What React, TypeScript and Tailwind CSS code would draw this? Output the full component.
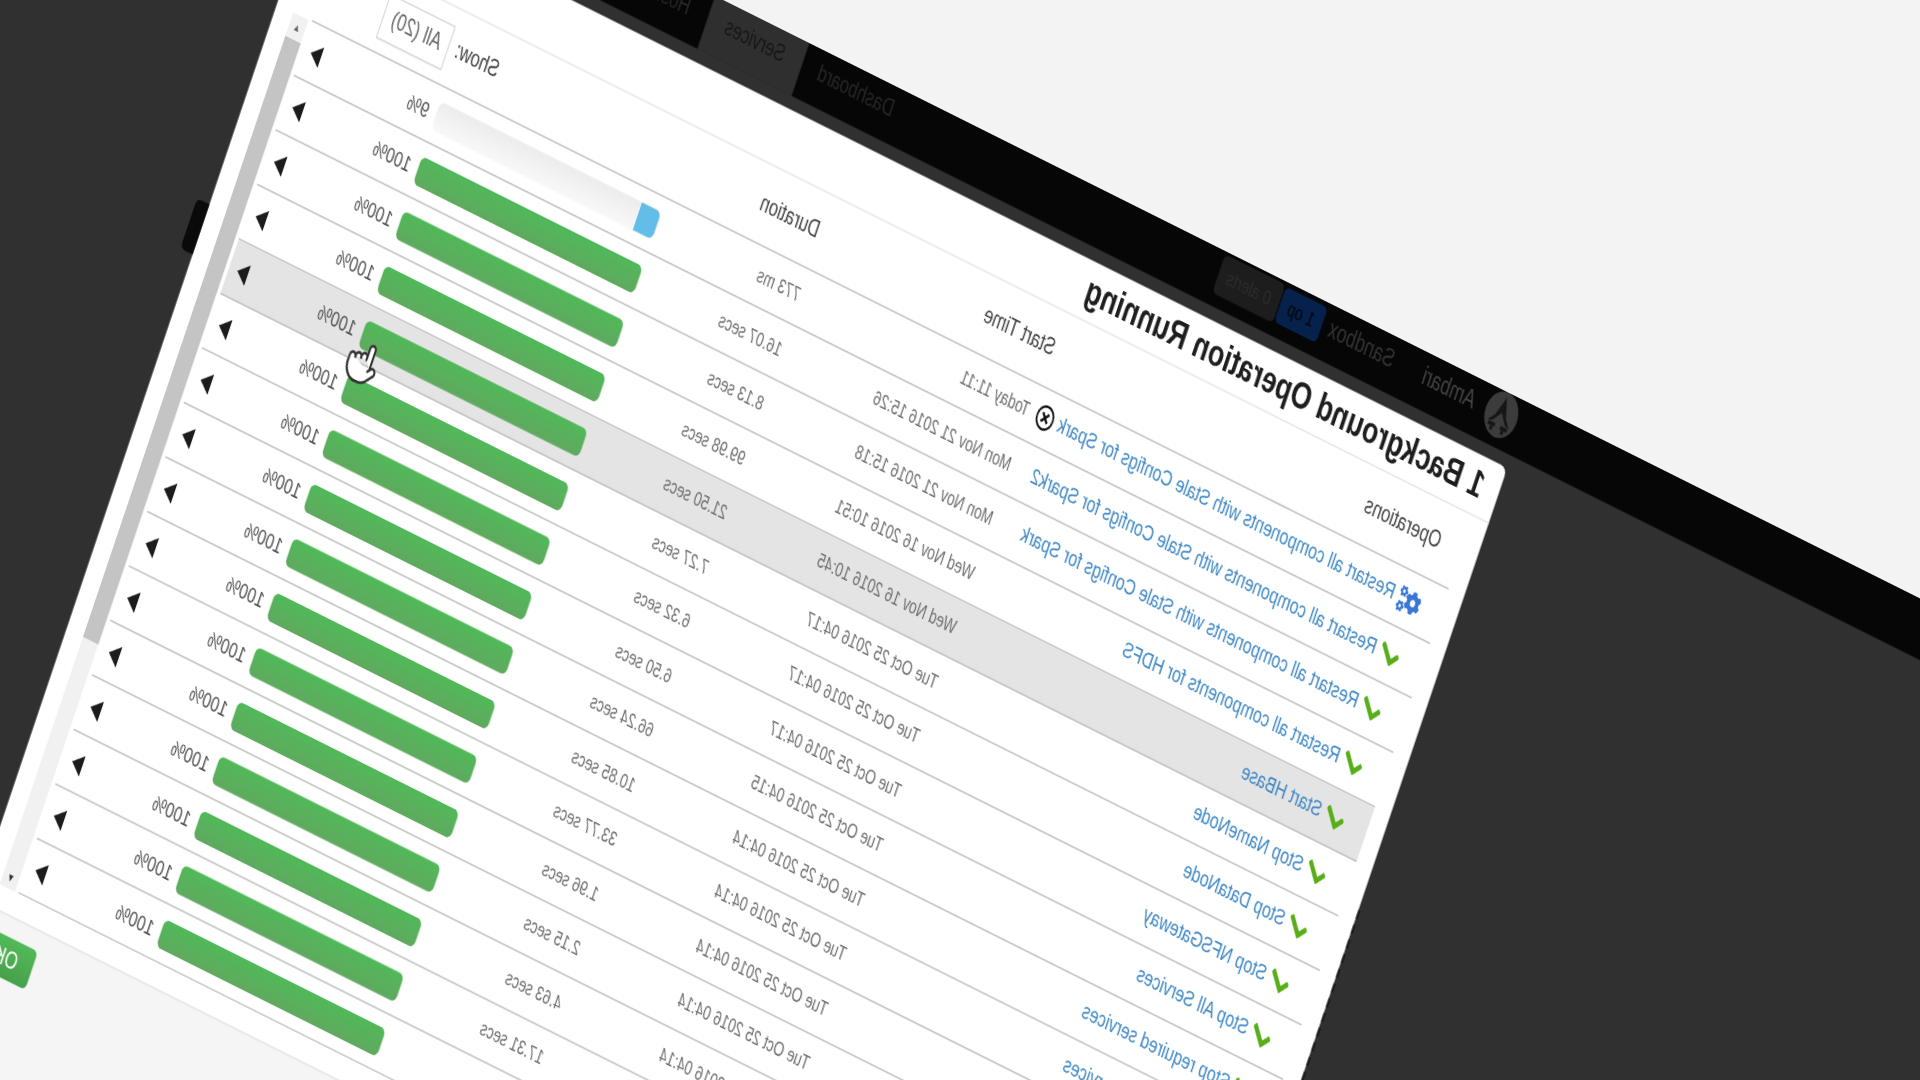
import { Pointer } from "lucide-react";
import { FaCheck, FaCogs, FaRegTimesCircle } from "react-icons/fa";

type Row = { name: string; time: string; dur: string; pct: number; done: boolean; active?: boolean };

const rows: Row[] = [
  { name: "Restart all components with Stale Configs for Spark", time: "Today 11:11", dur: "773 ms", pct: 9, done: false },
  { name: "Restart all components with Stale Configs for Spark2", time: "Mon Nov 21 2016 15:26", dur: "16.07 secs", pct: 100, done: true },
  { name: "Restart all components with Stale Configs for Spark", time: "Mon Nov 21 2016 15:18", dur: "8.13 secs", pct: 100, done: true },
  { name: "Restart all components for HDFS", time: "Wed Nov 16 2016 10:51", dur: "99.98 secs", pct: 100, done: true },
  { name: "Start HBase", time: "Wed Nov 16 2016 10:45", dur: "21.50 secs", pct: 100, done: true, active: true },
  { name: "Stop NameNode", time: "Tue Oct 25 2016 04:17", dur: "7.27 secs", pct: 100, done: true },
  { name: "Stop DataNode", time: "Tue Oct 25 2016 04:17", dur: "6.32 secs", pct: 100, done: true },
  { name: "Stop NFSGateway", time: "Tue Oct 25 2016 04:17", dur: "6.50 secs", pct: 100, done: true },
  { name: "Stop All Services", time: "Tue Oct 25 2016 04:15", dur: "66.24 secs", pct: 100, done: true },
  { name: "Stop required services", time: "Tue Oct 25 2016 04:14", dur: "10.85 secs", pct: 100, done: true },
  { name: "Start required services", time: "Tue Oct 25 2016 04:14", dur: "33.77 secs", pct: 100, done: true },
  { name: "Stop NameNode", time: "Tue Oct 25 2016 04:14", dur: "1.96 secs", pct: 100, done: true },
  { name: "Stop DataNode", time: "Tue Oct 25 2016 04:14", dur: "2.15 secs", pct: 100, done: true },
  { name: "Stop NFSGateway", time: "Tue Oct 25 2016 04:14", dur: "4.63 secs", pct: 100, done: true },
  { name: "Stop All Services", time: "Tue Oct 25 2016 04:14", dur: "17.31 secs", pct: 100, done: true },
  { name: "Stop required services", time: "Tue Oct 25 2016 04:13", dur: "3.12 secs", pct: 100, done: true },
];

function TableRow({ row }: { row: Row }) {
  return (
    <div className={`flex h-[37px] items-center border-b-[1.4px] border-[#c0c0c0] ${row.active ? "bg-[#e4e4e4]" : ""}`}>
      <div className="flex w-[44px] shrink-0 justify-end pr-[4px]">
        {row.done ? (
          <FaCheck size={18} className="text-[#58ae18]" />
        ) : (
          <FaCogs size={21} className="text-[#3877d6]" />
        )}
      </div>
      <div className="flex w-[357px] shrink-0 items-center gap-[4px] text-[14.4px] text-[#3f88c5]">
        <span>{row.name}</span>
        {!row.done && <FaRegTimesCircle size={17} className="text-[#111111]" />}
      </div>
      <div className="w-[224px] shrink-0 text-[12.5px] text-[#6e6e6e]">{row.time}</div>
      <div className="w-[139px] shrink-0 text-[12.5px] text-[#6e6e6e]">{row.dur}</div>
      <div className="h-[19px] w-[216px] shrink-0 overflow-hidden rounded-[5px] bg-gradient-to-b from-[#ececec] to-[#f8f8f8]">
        {row.pct === 100 ? (
          <div className="h-full w-full bg-gradient-to-b from-[#50b958] to-[#5fa95f]" />
        ) : (
          <div className="h-full w-[9%] bg-[#62bde8]" />
        )}
      </div>
      <div className="ml-[7px] w-[105px] shrink-0 text-[14px] text-[#505050]">{row.pct}%</div>
      <svg viewBox="0 0 10 14" className="h-[15px] w-[10px] shrink-0">
        <polygon points="0,0 10,7 0,14" fill="#1c1c1c" />
      </svg>
    </div>
  );
}

export default function App() {
  return (
    <div className="relative h-[1080px] w-[1920px] overflow-hidden bg-[#f3f3f3] font-['Liberation_Sans',Arial,sans-serif]">
      <div className="absolute left-0 top-0 flex h-[1000px] w-[2400px] origin-top-left flex-col blur-[0.45px] [transform:matrix(-1.024,-0.512,-0.496,1.473,2246,761.4)]">
        {/* Navbar */}
        <div className="flex h-[36px] shrink-0 items-stretch bg-[#060606] pl-[705px] text-[15px] text-[#333333]">
          <div className="flex items-center pb-[6px]">
            <div className="flex h-[30px] w-[30px] shrink-0 items-center justify-center rounded-full bg-[#3c3c3c]">
              <svg viewBox="0 0 20 20" className="h-[26px] w-[26px]">
                <path d="M10 1 L14 11 L18 15 L14.5 14 L10 9 L5.5 14 L2 15 L6 11 Z" fill="#161616" />
                <path d="M3 15 H8 V17 H3 Z M12 15 H17 V17 H12 Z" fill="#161616" />
                <path d="M5 17 H7 V19 H5 Z M13 17 H15 V19 H13 Z" fill="#161616" />
              </svg>
            </div>
            <span className="ml-[11px] w-[53px] text-[16px] text-[#424242]">Ambari</span>
            <span className="ml-[26px] w-[64px] text-[16px]">Sandbox</span>
            <span className="ml-[6px] rounded bg-[#05214c] px-2 py-[2px] text-[13px] text-[#050505]">1 op</span>
            <span className="ml-[1px] rounded bg-[#1d1d1d] px-2 py-[3px] text-[13px] text-[#2c2c2c]">0 alerts</span>
          </div>
          <div className="ml-[302px] flex items-center px-[16px] pb-[7px] text-[#262626]">Dashboard</div>
          <div className="flex items-center bg-[#2f2f2f] px-[17px] pb-[7px] text-[#161616]">Services</div>
          <div className="flex items-center px-[18px] pb-[7px] text-[#262626]">Hosts</div>
        </div>
        {/* Backdrop */}
        <div className="flex-1 bg-[#303030] pl-[700px] pt-[8px]">
          <div className="relative w-[1159px] rounded-md bg-white">
            <div className="absolute left-full top-[224px] h-[34px] w-[12px] rounded-r bg-[#0a0a0a]" />
            <div className="absolute bottom-0 right-full top-[300px] w-[2px] border-l-2 border-dashed border-[#1c1c1c]" />
            <div className="flex h-[38px] items-center border-b border-[#e6e6e6] pl-[15px] text-[24.2px] font-bold text-[#1e1e1e]">
              1 Background Operation Running
            </div>
            <div className="relative ml-[15px] w-[1110px]">
              <div className="flex h-[50px] items-center border-b-[1.4px] border-[#c0c0c0] text-[15px] text-[#444444]">
                <span className="ml-[20px] w-[377px]">Operations</span>
                <span className="w-[230px]">Start Time</span>
                <span className="w-[313px]">Duration</span>
                <span>Show:</span>
                <span className="ml-[6px] mt-[2px] flex h-[30px] w-[64px] items-center justify-center border border-[#d8d8d8] text-[#666666]">All (20)</span>
              </div>
              <div className="h-[592px] overflow-hidden">
                {rows.map((r, i) => (
                  <TableRow key={i} row={r} />
                ))}
              </div>
              <Pointer size={31} className="absolute left-[956px] top-[218px] fill-white text-[#333333]" strokeWidth={1.4} />
              <div className="absolute bottom-0 left-[1113px] top-[50px] flex w-[15px] flex-col bg-[#f1f1f1]">
                <div className="flex h-[16px] items-center justify-center text-[7px] text-[#666666]">▲</div>
                <div className="h-[408px] bg-[#c4c4c4]" />
                <div className="mt-auto flex h-[14px] items-center justify-center text-[7px] text-[#333333]">▼</div>
              </div>
            </div>
            <div className="mt-[15px] h-[130px] border-t border-[#e6e6e6] bg-[#f5f5f5] pt-[12px]">
              <div className="ml-[1092px] flex h-[26px] w-[50px] items-center justify-center rounded bg-gradient-to-b from-[#52b958] to-[#47a04b] text-[15px] text-white">
                OK
              </div>
            </div>
          </div>
        </div>
      </div>
    </div>
  );
}
